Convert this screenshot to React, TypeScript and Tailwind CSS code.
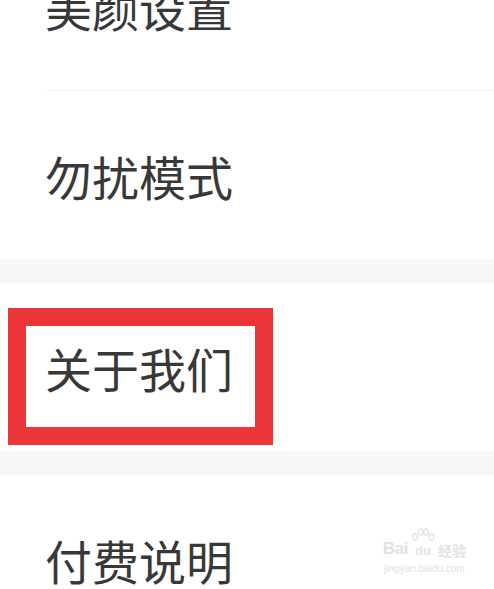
import React from 'react';

const font = { fontFamily: '"Noto Sans CJK SC", "Noto Sans", sans-serif' };

const Row: React.FC<{ label: string; children?: React.ReactNode }> = ({ label, children }) => (
  <div className="relative flex h-[168px] items-center bg-white pl-[45px]">
    <span className="text-[47px] leading-none text-[#383838]">{label}</span>
    {children}
  </div>
);

const Watermark: React.FC = () => (
  <div className="absolute right-[28px] top-[62px] flex flex-col items-center text-[#e2e2e2]">
    <div className="flex items-end">
      <span className="text-[17px] font-bold leading-none tracking-tight" style={{ fontFamily: '"Liberation Sans", sans-serif' }}>
        Bai
      </span>
      <span className="relative mx-[2px] flex h-[20px] w-[26px] items-end justify-center">
        <svg className="absolute -top-[9px] left-0" width="26" height="14" viewBox="0 0 26 14" fill="none" stroke="#e2e2e2" strokeWidth="1.3">
          <ellipse cx="5" cy="9" rx="2.4" ry="3" />
          <ellipse cx="10.5" cy="4" rx="2.4" ry="3" />
          <ellipse cx="16" cy="4" rx="2.4" ry="3" />
          <ellipse cx="21.5" cy="9" rx="2.4" ry="3" />
        </svg>
        <span className="text-[13px] font-bold leading-none" style={{ fontFamily: '"Liberation Sans", sans-serif' }}>
          du
        </span>
      </span>
      <span className="text-[14px] font-bold leading-none">经验</span>
    </div>
    <span className="mt-[7px] text-[10px] leading-none" style={{ fontFamily: '"Liberation Sans", sans-serif' }}>
      jingyan.baidu.com
    </span>
  </div>
);

export default function App() {
  return (
    <div className="h-[589px] w-[494px] overflow-hidden bg-white" style={font}>
      <div className="-mt-[78px]">
        <Row label="美颜设置" />
        <div className="ml-[45px] h-px bg-[#f2f2f2]" />
        <Row label="勿扰模式" />
        <div className="h-[24px] bg-[#f8f8f8]" />
        <Row label="关于我们">
          <div className="absolute left-[8px] top-[25px] h-[137px] w-[265px] border-[18px] border-[#ec3538]" />
        </Row>
        <div className="h-[24px] bg-[#f8f8f8]" />
        <Row label="付费说明">
          <Watermark />
        </Row>
      </div>
    </div>
  );
}
